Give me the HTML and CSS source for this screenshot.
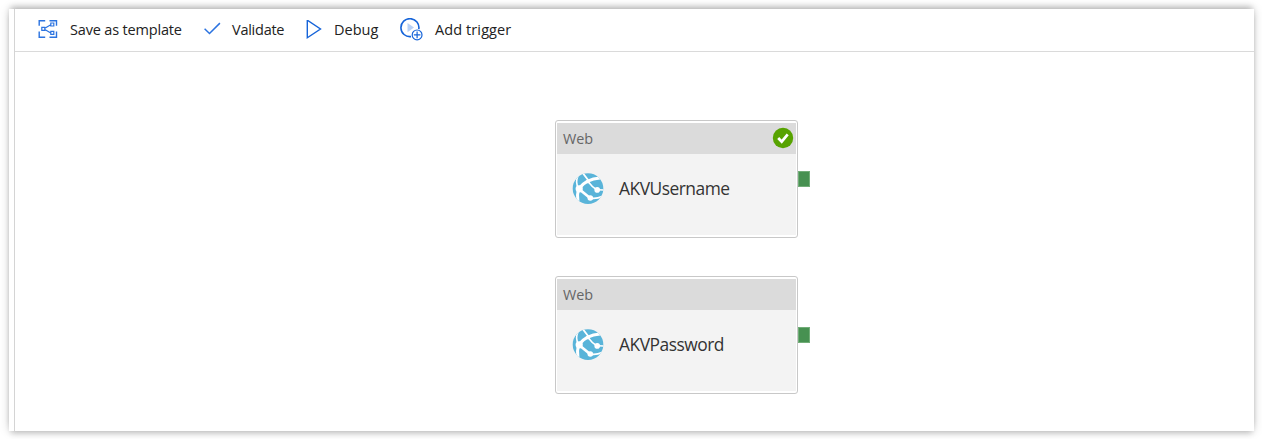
FILE: index.html
```html
<!DOCTYPE html>
<html lang="en">
<head>
<meta charset="utf-8">
<title>Pipeline</title>
<link rel="stylesheet" href="styles.css">
</head>
<body>
<svg class="defs" width="0" height="0" aria-hidden="true">
  <symbol id="globe" viewBox="0 0 40 40">
    <clipPath id="disc"><circle cx="20" cy="20.6" r="15.3"/></clipPath>
    <circle cx="20" cy="20.6" r="15.3" fill="#59b4d9"/>
    <g clip-path="url(#disc)" fill="none" stroke="#fff">
      <path d="M11 20.5 Q18 11 32 10" stroke-width="3"/>
      <path d="M14 4 Q17 8 20.5 12.5" stroke-width="1.8"/>
      <path d="M10.5 20.5 Q7 14 10 8" stroke-width="1.6"/>
      <path d="M10.5 20.5 Q8.8 27 10 34" stroke-width="3"/>
      <path d="M11 21 L22 30" stroke-width="2.8"/>
      <path d="M20 13.5 Q24 19 29 22" stroke-width="1.5"/>
      <path d="M22 30 Q28 31.3 34 28.5" stroke-width="1.8"/>
      <path d="M29 21.7 L36 22" stroke-width="1.6"/>
    </g>
    <g fill="#fff"><circle cx="11.2" cy="20.8" r="3.6"/><circle cx="20" cy="13.6" r="1.8"/><circle cx="29.2" cy="21.9" r="2.8"/><circle cx="22.3" cy="30" r="2.8"/></g>
  </symbol>
</svg>
<main class="panel">
  <div class="workspace">
    <div class="toolbar">
      <button class="command save"><svg width="20" height="20" viewBox="0 0 20 20" fill="none" stroke="#2b73e0" stroke-width="1.4"><path d="M1.2 5.8V.7H7.2M11.5 .7h7v5.1M18.5 11.6v5.6h-7M7.2 17.2h-6v-5.6"/><path d="M3.8 7.3h3v3h-3zM12.8 3h3v3h-3zM12.8 11.4h3v3h-3zM6.8 8.2l6-3.5M6.8 9.4l6 3.5" stroke-width="1.2"/></svg><span>Save as template</span></button>
      <button class="command validate"><svg width="18" height="20" viewBox="0 0 18 20" fill="none" stroke="#2b73e0" stroke-width="1.5"><path d="M.6 8.7l4.9 4.8L15.9 3.1"/></svg><span>Validate</span></button>
      <button class="command debug"><svg width="16" height="20" viewBox="0 0 16 20" fill="none" stroke="#1664d9" stroke-width="1.4"><path d="M1.3 .2v17.6L14.5 9z"/></svg><span>Debug</span></button>
      <button class="command trigger"><svg width="24" height="24" viewBox="0 0 24 24" fill="none" stroke="#1664d9"><path d="M11 18.6A9 9 0 1 1 18.8 11.1" stroke-width="1.6"/><path d="M7.5 4.9v9.4l6.5-4.7z" fill="#b9d1f5" stroke="none"/><circle cx="17.1" cy="16.9" r="4.9" fill="#fff" stroke-width="1.2"/><path d="M13.8 16.9h6.6M17.1 13.6v6.6" stroke-width="1.2"/></svg><span>Add trigger</span></button>
    </div>
    <div class="canvas">
      <section class="node username">
        <header class="node-type">Web<svg width="22" height="22" viewBox="0 0 22 22"><circle cx="11" cy="11" r="10.2" fill="#57a300"/><path d="M6.2 11l3.5 3.7 6-7.3" fill="none" stroke="#fff" stroke-width="2.7"/></svg></header>
        <div class="node-body"><svg width="40" height="40"><use href="#globe"/></svg><span class="name">AKVUsername</span></div>
        <i class="port"></i>
      </section>
      <section class="node password">
        <header class="node-type">Web</header>
        <div class="node-body"><svg width="40" height="40"><use href="#globe"/></svg><span class="name">AKVPassword</span></div>
        <i class="port"></i>
      </section>
    </div>
  </div>
</main>
</body>
</html>
```
FILE: styles.css
```css
* { box-sizing: border-box; }
body {
  margin: 0;
  height: 439px;
  padding: 9px 8px 8px 9px;
  overflow: hidden;
  background: #fff;
  font-family: "Segoe UI", "Open Sans", "Noto Sans", sans-serif;
}
.defs { position: absolute; }
.panel {
  height: 422px;
  padding-left: 5px;
  background: #fff;
  box-shadow: 0 0 10px rgba(0, 0, 0, .15), 0 -4px 6px -2px rgba(0, 0, 0, .24), 0 4px 6px -2px rgba(0, 0, 0, .2);
}
.workspace {
  display: flex;
  flex-direction: column;
  height: 100%;
  border-left: 1px solid #d4d4d4;
}
.toolbar {
  display: flex;
  align-items: center;
  flex: none;
  height: 43px;
  padding-left: 23px;
  border-bottom: 1px solid #dadada;
}
.command {
  display: flex;
  align-items: center;
  padding: 0;
  border: 0;
  background: none;
  color: #222;
  font: 14.5px/20px "Segoe UI", "Open Sans", "Noto Sans", sans-serif;
  white-space: nowrap;
}
.command svg { flex: none; }
.command span { display: block; }
.save { width: 166px; gap: 12px; }
.save span { letter-spacing: -.17px; }
.validate { width: 102px; gap: 10px; }
.validate span { letter-spacing: -.25px; }
.debug { width: 94px; gap: 12px; }
.trigger { gap: 11px; }
.trigger span { letter-spacing: .1px; }
.canvas { position: relative; flex: 1; }
.node {
  position: absolute;
  left: 540px;
  width: 243px;
  height: 118px;
  padding: 2px 1px;
  border: 1px solid #c8c8c8;
  border-radius: 3px;
  background: #fff;
}
.username { top: 68px; }
.password { top: 224px; }
.node-type {
  display: flex;
  align-items: center;
  justify-content: space-between;
  height: 31px;
  padding: 0 2px 1px 6px;
  background: #dbdbdb;
  color: #666;
  font-size: 14.4px;
}
.node-body {
  display: flex;
  align-items: center;
  height: 81px;
  padding: 0 0 13px 11px;
  gap: 11px;
  background: #f3f3f3;
  color: #333;
}
.name {
  font-size: 17.4px;
  letter-spacing: -.5px;
}
.port {
  position: absolute;
  left: 242px;
  top: 50px;
  width: 12px;
  height: 16px;
  border: 1px solid #72ad78;
  background: #479151;
}
```
